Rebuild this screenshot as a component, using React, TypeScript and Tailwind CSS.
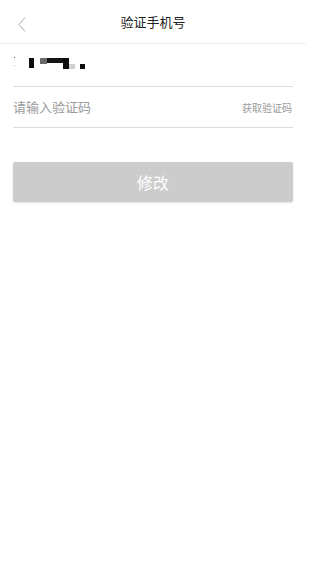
import React from 'react';

export default function App() {
  return (
    <div className="min-h-screen w-full bg-white" style={{ fontFamily: '"Noto Sans CJK SC", "Noto Sans", sans-serif' }}>
      <div className="w-[306px]">
        {/* Header */}
        <div className="relative flex h-[44px] items-center justify-center border-b border-[#ececec]">
          <button className="absolute left-[14px] top-[14px] flex h-[20px] w-[16px] items-center justify-center">
            <svg width="8" height="15" viewBox="0 0 8 15" fill="none">
              <path d="M7 0.5L1 7.5L7 14.5" stroke="#a8a8a8" strokeWidth="1" />
            </svg>
          </button>
          <h1 className="text-[13px] leading-none text-[#222]">验证手机号</h1>
        </div>

        <div className="px-[13px]">
          {/* Phone row */}
          <div className="flex h-[43px] items-center border-b border-[#dcdcdc]">
            <svg width="80" height="16" viewBox="0 0 80 16" className="-mt-[4px]">
              <rect x="1" y="2" width="1" height="1" fill="#555" />
              <rect x="1" y="10" width="1" height="1" fill="#bbb" />
              <rect x="16" y="3" width="5" height="10" fill="#0d0d0d" />
              <rect x="27" y="3" width="7" height="6" fill="#6a6a6a" />
              <rect x="34" y="3" width="16" height="5" fill="#141414" />
              <rect x="50" y="3" width="6" height="11" fill="#0d0d0d" />
              <rect x="56" y="9" width="6" height="5" fill="#d0d0d0" />
              <rect x="67" y="9" width="5" height="5" fill="#0d0d0d" />
            </svg>
          </div>

          {/* Code row */}
          <div className="flex h-[41px] items-center justify-between border-b border-[#dcdcdc]">
            <input
              className="w-[180px] bg-transparent text-[13px] text-[#333] outline-none placeholder:text-[#9a9a9a]"
              placeholder="请输入验证码"
            />
            <button className="pr-[1px] text-[10px] text-[#9a9a9a]">获取验证码</button>
          </div>

          {/* Submit */}
          <button className="mt-[34px] flex h-[40px] w-full items-center justify-center rounded-[2px] bg-[#cccccc] text-[16px] text-white shadow-[0_1px_2px_rgba(0,0,0,0.12)]">
            修改
          </button>
        </div>
      </div>
    </div>
  );
}
